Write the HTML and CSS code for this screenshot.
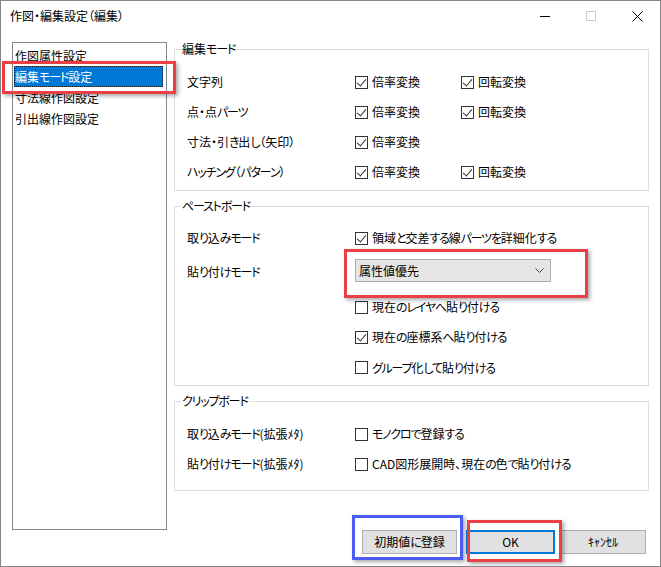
FILE: index.html
```html
<!DOCTYPE html>
<html lang="ja">
<head>
<meta charset="utf-8">
<title>作図・編集設定（編集）</title>
<link rel="stylesheet" href="styles.css">
</head>
<body>
<div class="window">
  <div class="titlebar">
    <span class="title">作図・編集設定（編集）</span>
    <div class="caption-btns">
      <span class="cap"><svg width="10" height="10" viewBox="0 0 10 10"><path d="M0 5.5h10" stroke="#000" stroke-width="1"/></svg></span>
      <span class="cap"><svg width="10" height="10" viewBox="0 0 10 10"><rect x="0.5" y="0.5" width="9" height="9" fill="none" stroke="#cccccc"/></svg></span>
      <span class="cap"><svg width="11" height="11" viewBox="0 0 11 11"><path d="M0.5 0.5L10.5 10.5M10.5 0.5L0.5 10.5" stroke="#000" stroke-width="1"/></svg></span>
    </div>
  </div>

  <div class="body">
    <ul class="list">
      <li class="item">作図属性設定</li>
      <li class="item selected">編集<span class="k">モード</span>設定</li>
      <li class="item">寸法線作図設定</li>
      <li class="item">引出線作図設定</li>
    </ul>

    <div class="right">
      <fieldset class="group g1">
        <legend>編集<span class="k">モード</span></legend>
        <div class="rows">
          <div class="row"><span class="lbl">文字列</span>
            <span class="chk"><span class="cb on"></span><span class="txt">倍率変換</span></span>
            <span class="chk"><span class="cb on"></span><span class="txt">回転変換</span></span></div>
          <div class="row"><span class="lbl">点・点<span class="k">パーツ</span></span>
            <span class="chk"><span class="cb on"></span><span class="txt">倍率変換</span></span>
            <span class="chk"><span class="cb on"></span><span class="txt">回転変換</span></span></div>
          <div class="row"><span class="lbl">寸法・引<span class="k">き</span>出<span class="k">し</span>（矢印）</span>
            <span class="chk"><span class="cb on"></span><span class="txt">倍率変換</span></span></div>
          <div class="row"><span class="lbl"><span class="k">ハッチング</span>（<span class="k">パターン</span>）</span>
            <span class="chk"><span class="cb on"></span><span class="txt">倍率変換</span></span>
            <span class="chk"><span class="cb on"></span><span class="txt">回転変換</span></span></div>
        </div>
      </fieldset>

      <fieldset class="group g2">
        <legend><span class="k">ペーストボード</span></legend>
        <div class="rows">
          <div class="row"><span class="lbl">取<span class="k">り</span>込<span class="k">みモード</span></span>
            <span class="chk wide"><span class="cb on"></span><span class="txt">領域<span class="k">と</span>交差<span class="k">する</span>線<span class="k">パーツを</span>詳細化<span class="k">する</span></span></span></div>
          <div class="row tall"><span class="lbl lbl-top">貼<span class="k">り</span>付<span class="k">けモード</span></span>
            <div class="select"><span>属性値優先</span><svg width="9" height="5" viewBox="0 0 9 5"><path d="M0.5 0.5L4.5 4.5L8.5 0.5" fill="none" stroke="#444" stroke-width="1"/></svg></div></div>
          <div class="row"><span class="lbl"></span>
            <span class="chk wide"><span class="cb"></span><span class="txt">現在<span class="k">のレイヤへ</span>貼<span class="k">り</span>付<span class="k">ける</span></span></span></div>
          <div class="row"><span class="lbl"></span>
            <span class="chk wide"><span class="cb on"></span><span class="txt">現在<span class="k">の</span>座標系<span class="k">へ</span>貼<span class="k">り</span>付<span class="k">ける</span></span></span></div>
          <div class="row last"><span class="lbl"></span>
            <span class="chk wide"><span class="cb"></span><span class="txt"><span class="k">グループ</span>化<span class="k">して</span>貼<span class="k">り</span>付<span class="k">ける</span></span></span></div>
        </div>
      </fieldset>

      <fieldset class="group g3">
        <legend><span class="k">クリップボード</span></legend>
        <div class="rows">
          <div class="row"><span class="lbl">取<span class="k">り</span>込<span class="k">みモード</span>(拡張ﾒﾀ)</span>
            <span class="chk wide"><span class="cb"></span><span class="txt"><span class="k">モノクロで</span>登録<span class="k">する</span></span></span></div>
          <div class="row"><span class="lbl">貼<span class="k">り</span>付<span class="k">けモード</span>(拡張ﾒﾀ)</span>
            <span class="chk wide"><span class="cb"></span><span class="txt">CAD図形展開時、現在<span class="k">の</span>色<span class="k">で</span>貼<span class="k">り</span>付<span class="k">ける</span></span></span></div>
        </div>
      </fieldset>

      <div class="buttons">
        <button class="btn b-init">初期値<span class="k">に</span>登録</button>
        <button class="btn b-ok">OK</button>
        <button class="btn b-cancel">ｷｬﾝｾﾙ</button>
      </div>
    </div>
  </div>

  <div class="anno red a-list"></div>
  <div class="anno red a-select"></div>
  <div class="anno blue a-init"></div>
  <div class="anno red a-ok"></div>
</div>
</body>
</html>
```

FILE: styles.css
```css
* { box-sizing: border-box; }

html, body {
  margin: 0;
  padding: 0;
  background: #ffffff;
}

body {
  font-family: "Noto Sans CJK JP", "Noto Sans", sans-serif;
  font-size: 12px;
  color: #000;
  font-feature-settings: "palt";
}

/* kana runs are narrower in the original UI font */
.k { letter-spacing: -1.2px; }

.window {
  position: relative;
  width: 661px;
  height: 567px;
  border: 1px solid #858585;
  background: #fff;
  overflow: hidden;
}

/* title bar */
.titlebar {
  height: 30px;
  display: flex;
  align-items: center;
  padding-left: 9px;
}
.title { line-height: 14px; }
.caption-btns {
  margin-left: auto;
  display: flex;
  height: 30px;
}
.cap {
  width: 46px;
  height: 30px;
  display: flex;
  align-items: center;
  justify-content: center;
}
.cap svg { display: block; }

/* body */
.body {
  display: flex;
  gap: 7px;
  padding: 11px 0 0 11px;
}

.list {
  list-style: none;
  margin: 0;
  width: 155px;
  height: 488px;
  border: 1px solid #828790;
  padding: 2px 3px 0 1px;
}
.item {
  height: 21px;
  line-height: 21px;
  padding-left: 1px;
  white-space: nowrap;
}
.item.selected {
  background: #0078d7;
  color: #fff;
  outline: 1px dotted #1a1a1a;
  outline-offset: -1px;
}

.right {
  width: 475px;
  display: flex;
  flex-direction: column;
}

/* group boxes */
.group {
  margin: 0;
  padding: 0;
  border: 1px solid #dcdcdc;
  min-width: 0;
}
.group + .group { margin-top: 8px; }
.group legend {
  margin-left: 6px;
  padding: 0 1px;
  line-height: 14px;
}

.rows { padding-left: 12px; }
.g1 .rows { padding-top: 11px; padding-bottom: 3px; }
.g2 .rows { padding-top: 10px; padding-bottom: 2px; }
.g3 .rows { padding-top: 11px; padding-bottom: 11px; }

.row {
  display: grid;
  grid-template-columns: 168px 106px auto;
  align-items: center;
  height: 30px;
}
.row.tall { height: 39px; align-items: start; }
.row.last { height: 31px; }
.lbl { line-height: 14px; white-space: nowrap; }
.lbl-top { margin-top: 12px; }

.chk {
  display: flex;
  align-items: center;
  gap: 4px;
  line-height: 14px;
  white-space: nowrap;
}
.chk.wide { grid-column: 2 / 4; }
.txt { display: block; }

.cb {
  width: 13px;
  height: 13px;
  border: 1px solid #333;
  background: #fff;
  flex: none;
  position: relative;
}
.cb.on::after {
  content: "";
  position: absolute;
  left: 3px;
  top: 0px;
  width: 4px;
  height: 8px;
  border-right: 1px solid #333;
  border-bottom: 1px solid #333;
  transform: rotate(40deg);
  transform-origin: center;
}

.select {
  grid-column: 2 / 4;
  margin-top: 6px;
  width: 196px;
  height: 23px;
  border: 1px solid #adadad;
  background: #e5e5e5;
  display: flex;
  align-items: center;
  justify-content: space-between;
  padding: 0 6px 0 3px;
  line-height: 14px;
}
.select svg { display: block; }

/* buttons */
.buttons {
  margin-top: 39px;
  display: flex;
  justify-content: flex-end;
  padding-right: 3px;
}
.btn {
  height: 24px;
  font-family: inherit;
  font-size: 12px;
  font-feature-settings: "palt";
  color: #000;
  background: #e1e1e1;
  border: 1px solid #adadad;
  padding: 0;
  line-height: 14px;
}
.b-init { width: 95px; }
.b-ok {
  width: 89px;
  margin-left: 9px;
  border: 2px solid #0078d7;
}
.b-cancel { width: 86px; margin-left: 5px; }

/* screenshot annotations */
.anno {
  position: absolute;
  border: 3px solid #ea3f45;
  box-shadow: 2px 2px 4px rgba(0, 0, 0, 0.35);
}
.anno.blue { border-color: #4a5cf3; }
.a-list { left: 1px; top: 60px; width: 174px; height: 33px; }
.a-select { left: 343px; top: 248px; width: 244px; height: 49px; }
.a-init { left: 351px; top: 514px; width: 111px; height: 45px; }
.a-ok { left: 466px; top: 519px; width: 95px; height: 42px; }
```
